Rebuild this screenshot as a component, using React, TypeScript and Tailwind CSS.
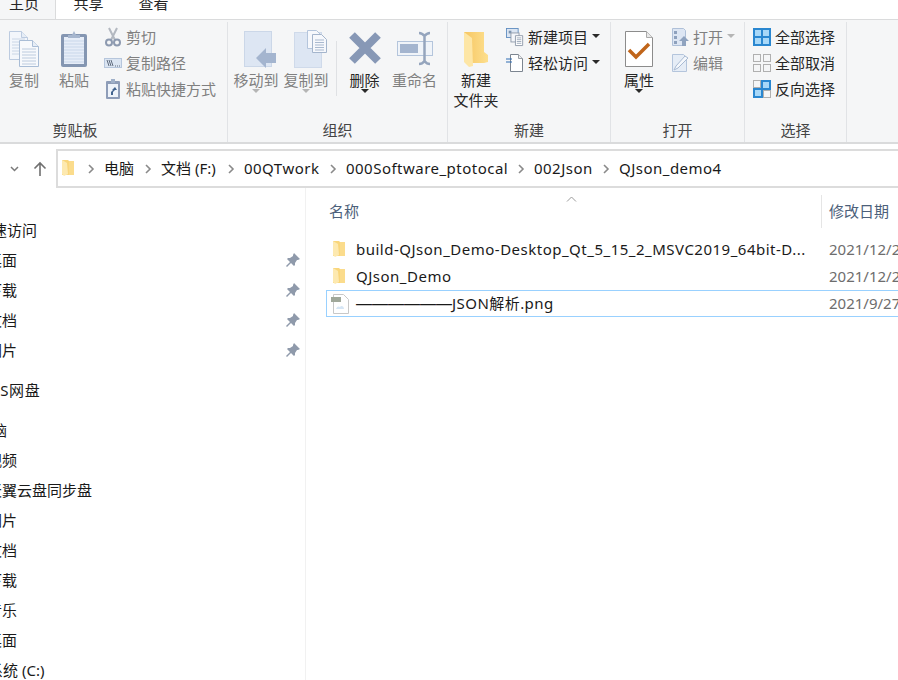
import type { ReactNode } from 'react';

const font = { fontFamily: '"Noto Sans", "Noto Sans CJK SC", sans-serif' };

const Copy = () => (
  <svg width="32" height="38" viewBox="0 0 32 38">
    <path d="M1.5 1.5h12l6 6v22h-18z" fill="#f3f6fb" stroke="#bccbe0" />
    <path d="M13.5 1.5v6h6" fill="#e6edf6" stroke="#bccbe0" />
    <path d="M4 9h13M4 12h13M4 15h13M4 18h13M4 21h13M4 24h13" stroke="#cad6e6" />
    <path d="M11.5 10.5h13l6 6v20h-19z" fill="#f7f9fc" stroke="#a9bdd6" />
    <path d="M24.5 10.5v6h6" fill="#e6edf6" stroke="#a9bdd6" />
    <path d="M14 19h14M14 22h14M14 25h14M14 28h14M14 31h14M14 34h14" stroke="#bccbde" />
  </svg>
);

const Paste = () => (
  <svg width="28" height="38" viewBox="0 0 28 38">
    <rect x="1" y="4" width="26" height="33" rx="2" fill="#8496b2" />
    <rect x="4" y="7" width="20" height="27" fill="#e6edf8" />
    <path d="M4 11h20M4 14h20M4 17h20M4 20h20M4 23h20M4 26h20M4 29h20M4 32h20" stroke="#c9d7ea" />
    <path d="M8 8V5h4l2-4 2 4h4v3z" fill="#a6b6ce" />
  </svg>
);

const Scissors = () => (
  <svg width="18" height="20" viewBox="0 0 18 20" fill="none">
    <path d="M5 1l6 12M13 1L7 13" stroke="#b3b8c0" strokeWidth="2" />
    <circle cx="5" cy="15.5" r="3" stroke="#8d9ab0" strokeWidth="2" />
    <circle cx="13" cy="15.5" r="3" stroke="#8d9ab0" strokeWidth="2" />
  </svg>
);

const CopyPath = () => (
  <svg width="18" height="12" viewBox="0 0 18 12">
    <rect x="0.5" y="1.5" width="17" height="9" fill="#dbe5f2" stroke="#b6c6dc" />
    <path d="M3 3l2 6M5 3l2 6M7 3l2 6M11 9h1M13 9h1M15 9h1" stroke="#5f6b7d" />
  </svg>
);

const PasteShortcut = () => (
  <svg width="18" height="20" viewBox="0 0 18 20">
    <rect x="2" y="2" width="14" height="18" rx="1" fill="#8e9db8" />
    <rect x="4" y="5" width="10" height="13" fill="#eef3fa" />
    <rect x="7" y="0" width="4" height="4" fill="#9fb0c9" />
    <path d="M7 16v-3l2-2H8l3-3 2 3h-2l-2 2v3z" fill="#42648f" />
  </svg>
);

const MoveTo = () => (
  <svg className="ml-[10px]" width="34" height="38" viewBox="0 0 34 38">
    <rect x="0.5" y="1.5" width="27" height="35" fill="#dde6f3" stroke="#cbd7e8" />
    <path d="M12 28l10-10v5h10v10H22v5z" fill="#a4b5cf" />
  </svg>
);

const CopyTo = () => (
  <svg className="ml-[10px]" width="34" height="38" viewBox="0 0 34 38">
    <rect x="0.5" y="2.5" width="27" height="35" fill="#dde6f3" stroke="#cfdaea" />
    <path d="M13.5 0.5h9l5 5v13h-14z" fill="#f6f8fc" stroke="#b4c5dc" />
    <path d="M18.5 4.5h9l5 5v13h-14z" fill="#f6f8fc" stroke="#a4b5cc" />
    <path d="M21 10h9M21 12.5h9M21 15h9M21 17.5h9M21 20h9" stroke="#a9b9cf" />
  </svg>
);

const Delete = () => (
  <svg width="34" height="38" viewBox="0 0 34 38">
    <path d="M4 5l26 26M30 5L4 31" stroke="#8798b6" strokeWidth="8" />
  </svg>
);

const Rename = () => (
  <svg width="38" height="38" viewBox="0 0 38 38">
    <rect x="1.5" y="11.5" width="35" height="14" fill="#f0f4f9" stroke="#b4c5dc" />
    <rect x="4" y="14" width="18" height="9" fill="#a4b5cf" />
    <path d="M23 3c3 0 4 1 5.5 3C30 4 31 3 34 3M28.5 6v25M23 34c3 0 4-1 5.5-3 1.5 2 2.5 3 5.5 3" fill="none" stroke="#95a5bd" strokeWidth="2.5" />
  </svg>
);

const NewFolder = () => (
  <svg width="26" height="38" viewBox="0 0 26 38">
    <defs>
      <linearGradient id="folderBack" x1="0" x2="1" y1="0" y2="0">
        <stop offset="0" stopColor="#f6c662" />
        <stop offset="1" stopColor="#fddf8e" />
      </linearGradient>
    </defs>
    <path d="M1 2h20v20l4 3v7l-4 1H8L1 30z" fill="url(#folderBack)" />
    <path d="M1 2l8 6 1 28-4 1-5-5z" fill="#fde6a6" />
  </svg>
);

const NewItem = () => (
  <svg width="20" height="20" viewBox="0 0 20 20">
    <rect x="0.5" y="0.5" width="13" height="10" fill="#dbe5f2" stroke="#5f8cc0" />
    <path d="M3 3h3v3H3z" fill="#7c94b0" />
    <rect x="5.5" y="5.5" width="9" height="10" fill="#f4f6fa" stroke="#8d98a8" />
    <path d="M10.5 8.5h8v11h-8z" fill="#fff" stroke="#8d98a8" />
    <path d="M12 11h5M12 13h5M12 15h5M12 17h5" stroke="#9aa7b8" />
  </svg>
);

const EasyAccess = () => (
  <svg width="18" height="20" viewBox="0 0 18 20">
    <path d="M4.5 1.5h8l4 4v13h-12z" fill="#fff" stroke="#7c8590" />
    <path d="M12.5 1.5v4h4" fill="#eee" stroke="#9a9fa6" />
    <path d="M0 6h6M0 9h6" stroke="#2f6cb3" strokeWidth="1.2" />
  </svg>
);

const Properties = () => (
  <svg width="30" height="38" viewBox="0 0 30 38">
    <path d="M1.5 1.5h21l6 6v29h-27z" fill="#fff" stroke="#8c8c8c" />
    <path d="M22.5 1.5v6h6" fill="#e8e8e8" stroke="#aaa" />
    <path d="M5 20l7 7 13-13" fill="none" stroke="#c0651a" strokeWidth="3.5" />
  </svg>
);

const OpenIcon = () => (
  <svg width="18" height="20" viewBox="0 0 18 20">
    <path d="M1.5 1.5h11l2 2v15h-13z" fill="#dde6f3" stroke="#afc0d8" />
    <path d="M3 4h3v3H3zM3 9h3v3H3zM3 14h3v3H3z" fill="#8ea1bd" />
    <path d="M8 14l5-5 5 5h-3v5h-4v-5z" fill="#8fa3bf" />
  </svg>
);

const EditIcon = () => (
  <svg width="18" height="20" viewBox="0 0 18 20">
    <path d="M1.5 1.5h11l3 3v14h-14z" fill="#e6edf6" stroke="#b4c5dc" />
    <path d="M3 17l2-4 9-10 3 2-10 10z" fill="#f5f8fc" stroke="#a9bbd3" />
  </svg>
);

// 0 = grey outline, 1 = blue filled
const SelectGrid = ({ cells }: { cells: number[] }) => (
  <svg width="18" height="18" viewBox="0 0 18 18">
    {cells.map((c, i) => {
      const x = i % 2 === 0 ? 0.5 : 10.5;
      const y = i < 2 ? 0.5 : 10.5;
      if (c) {
        return (
          <rect
            key={i}
            x={i % 2 === 0 ? 1 : 9}
            y={i < 2 ? 1 : 9}
            width="8"
            height="8"
            fill="#a8d8f8"
            stroke="#2a87d0"
            strokeWidth="2"
          />
        );
      }
      return <rect key={i} x={x} y={y} width="7" height="7" fill="#f5f6f7" stroke="#b0b0b0" />;
    })}
  </svg>
);

const AllGrid = () => (
  <svg width="18" height="18" viewBox="0 0 18 18">
    <rect x="1" y="1" width="16" height="16" fill="#a8d8f8" stroke="#2a87d0" strokeWidth="2" />
    <path d="M9 0v18M0 9h18" stroke="#2a87d0" strokeWidth="2" />
  </svg>
);

const Folder = () => (
  <svg width="13" height="17" viewBox="0 0 13 17">
    <path d="M0 0h6l1 1h5v14H0z" fill="#f9d67c" />
    <path d="M7 1h5v14H7z" fill="#fbdc8c" />
    <path d="M0 0l5 3 1 11-4 2-2-2z" fill="#fde9b0" />
  </svg>
);

const PngFile = () => (
  <svg width="19" height="20" viewBox="0 0 19 20">
    <path d="M2.5 0.5h10l5 5v14h-15z" fill="#fff" stroke="#c8c8c8" />
    <rect x="0" y="3" width="10" height="5" fill="#a0a89a" />
    <path d="M5 15c1-3 3-3 4-2 1-2 4-1 4 2z" fill="#d6e6f5" />
  </svg>
);

const Pin = () => (
  <svg width="14" height="14" viewBox="0 0 14 14">
    <path d="M8 0l6 6-2 1-1 0-2 3v2l-1 1-3-3-4 4-1-1 4-4-3-3 1-1h2l3-2v-1z" fill="#8f9aab" />
  </svg>
);

const Caret = ({ light }: { light?: boolean }) => (
  <svg width="8" height="4" viewBox="0 0 8 4">
    <path d="M0 0h8L4 4z" fill={light ? '#b5b5b5' : '#2a2a2a'} />
  </svg>
);

const Chevron = () => (
  <svg width="7" height="10" viewBox="0 0 7 10" fill="none">
    <path d="M1 1l4 4-4 4" stroke="#8a8a8a" strokeWidth="1.6" />
  </svg>
);

type BigProps = {
  icon: ReactNode;
  label: string;
  label2?: string;
  width: string;
  disabled?: boolean;
  caret?: boolean;
};

const BigButton = ({ icon, label, label2, width, disabled, caret }: BigProps) => (
  <div className={`${width} flex flex-col items-center pt-[8px] shrink-0`}>
    <div className="h-[38px] flex items-center justify-center">{icon}</div>
    <div className={`mt-[2px] h-[20px] leading-[20px] whitespace-nowrap ${disabled ? 'text-[#808080]' : 'text-[#262626]'}`}>
      {label}
    </div>
    {label2 && <div className="h-[20px] leading-[20px] whitespace-nowrap text-[#262626]">{label2}</div>}
    {caret && (
      <div className="mt-[-1px]">
        <Caret light={disabled} />
      </div>
    )}
  </div>
);

const SmallRow = ({ icon, label, disabled, caret }: { icon: ReactNode; label: string; disabled?: boolean; caret?: 'dark' | 'light' }) => (
  <div className="h-[26px] flex items-center whitespace-nowrap">
    <div className="w-[18px] flex justify-start">{icon}</div>
    <span className={`ml-[4px] ${disabled ? 'text-[#808080]' : 'text-[#262626]'}`}>{label}</span>
    {caret && (
      <span className="ml-[4px] mb-[2px]">
        <Caret light={caret === 'light'} />
      </span>
    )}
  </div>
);

const Group = ({ width, label, labelClass, children }: { width: string; label: string; labelClass?: string; children: ReactNode }) => (
  <div className={`${width} h-[120px] my-[2px] shrink-0 flex flex-col border-r border-[#e1e3e6]`}>
    <div className="flex flex-1 min-h-0">{children}</div>
    <div className={`h-[20px] mb-[2px] leading-[20px] text-center text-[#444] ${labelClass ?? ''}`}>{label}</div>
  </div>
);

const Ribbon = () => (
  <div className="flex h-[124px] bg-[#f5f6f7] border-b-2 border-[#dadbdc] text-[15px]">
    <Group width="w-[228px]" label="剪贴板" labelClass="w-[150px]">
      <BigButton icon={<Copy />} label="复制" width="w-[48px]" disabled />
      <BigButton icon={<Paste />} label="粘贴" width="w-[52px]" disabled />
      <div className="pt-[2px] ml-[4px] text-[15px]">
        <SmallRow icon={<Scissors />} label="剪切" disabled />
        <SmallRow icon={<CopyPath />} label="复制路径" disabled />
        <SmallRow icon={<PasteShortcut />} label="粘贴快捷方式" disabled />
      </div>
    </Group>
    <Group width="w-[220px]" label="组织">
      <div className="w-[3px]" />
      <BigButton icon={<MoveTo />} label="移动到" width="w-[50px]" disabled caret />
      <BigButton icon={<CopyTo />} label="复制到" width="w-[50px]" disabled caret />
      <div className="ml-[5px] mt-[19px] h-[55px] w-px bg-[#dfe1e4]" />
      <BigButton icon={<Delete />} label="删除" width="w-[55px]" caret />
      <BigButton icon={<Rename />} label="重命名" width="w-[45px]" disabled />
    </Group>
    <Group width="w-[163px]" label="新建">
      <BigButton icon={<NewFolder />} label="新建" label2="文件夹" width="w-[56px]" />
      <div className="pt-[2px] ml-[2px]">
        <SmallRow icon={<NewItem />} label="新建项目" caret="dark" />
        <SmallRow icon={<EasyAccess />} label="轻松访问" caret="dark" />
      </div>
    </Group>
    <Group width="w-[134px]" label="打开">
      <BigButton icon={<Properties />} label="属性" width="w-[56px]" caret />
      <div className="pt-[2px] ml-[4px]">
        <SmallRow icon={<OpenIcon />} label="打开" disabled caret="light" />
        <SmallRow icon={<EditIcon />} label="编辑" disabled />
      </div>
    </Group>
    <Group width="w-[102px]" label="选择">
      <div className="pt-[2px] ml-[8px]">
        <SmallRow icon={<AllGrid />} label="全部选择" />
        <SmallRow icon={<SelectGrid cells={[0, 0, 0, 0]} />} label="全部取消" />
        <SmallRow icon={<SelectGrid cells={[0, 1, 1, 0]} />} label="反向选择" />
      </div>
    </Group>
  </div>
);

const crumbs = [
  { text: '电脑', width: 'w-[41px]' },
  { text: '文档 (F:)', width: 'w-[67px]' },
  { text: '00QTwork', width: 'w-[86px] tracking-[0.48px]' },
  { text: '000Software_ptotocal', width: 'w-[172px] tracking-[0.48px]' },
  { text: '002Json', width: 'w-[69px] tracking-[0.48px]' },
  { text: 'QJson_demo4', width: 'w-[120px] tracking-[0.48px]' },
];

const AddressBar = () => (
  <div className="flex h-[39px] mt-[5px] text-[15px]">
    <div className="w-[56px] flex items-center shrink-0 pl-[10px]">
      <svg width="9" height="6" viewBox="0 0 9 6" fill="none">
        <path d="M1 1l3.5 3.5L8 1" stroke="#7a7a7a" strokeWidth="1.5" />
      </svg>
      <svg className="ml-[14px]" width="14" height="16" viewBox="0 0 14 16" fill="none">
        <path d="M7 15V2M1.5 7.5L7 2l5.5 5.5" stroke="#707070" strokeWidth="1.6" />
      </svg>
    </div>
    <div className="flex-1 flex items-center border-y-2 border-l-2 border-[#dcdcdc] pl-[4px] text-[#1a1a1a]">
      <div className="w-[26px] flex shrink-0">
        <Folder />
      </div>
      {crumbs.map((c) => (
        <div key={c.text} className="flex items-center shrink-0">
          <Chevron />
          <span className={`ml-[9px] ${c.width} whitespace-nowrap`}>{c.text}</span>
        </div>
      ))}
    </div>
  </div>
);

const navGroups = [
  {
    className: 'mt-[27px]',
    items: [
      { text: '快速访问', shift: '-ml-[23px]' },
      { text: '桌面', shift: '-ml-[13px]', pin: true },
      { text: '下载', shift: '-ml-[13px]', pin: true },
      { text: '文档', shift: '-ml-[13px]', pin: true },
      { text: '图片', shift: '-ml-[13px]', pin: true },
    ],
  },
  {
    className: 'mt-[10px]',
    items: [{ text: 'WPS网盘', shift: '-ml-[24px] tracking-[0.6px]' }],
  },
  {
    className: 'mt-[10px]',
    items: [
      { text: '此电脑', shift: '-ml-[38px]' },
      { text: '视频', shift: '-ml-[13px]' },
      { text: '天翼云盘同步盘', shift: '-ml-[13px]' },
      { text: '图片', shift: '-ml-[13px]' },
      { text: '文档', shift: '-ml-[13px]' },
      { text: '下载', shift: '-ml-[13px]' },
      { text: '音乐', shift: '-ml-[13px]' },
      { text: '桌面', shift: '-ml-[13px]' },
      { text: '系统 (C:)', shift: '-ml-[12px]' },
    ],
  },
];

const Sidebar = () => (
  <div className="w-[306px] shrink-0 border-r border-[#f1f1f1] text-[15px] text-[#1a1a1a] overflow-hidden">
    {navGroups.map((g, i) => (
      <div key={i} className={g.className}>
        {g.items.map((item) => (
          <div key={item.text} className="h-[30px] flex items-center">
            <span className={`${item.shift} whitespace-nowrap flex-1`}>{item.text}</span>
            {'pin' in item && item.pin && (
              <span className="mr-[5px] flex">
                <Pin />
              </span>
            )}
          </div>
        ))}
      </div>
    ))}
  </div>
);

const files = [
  { name: 'build-QJson_Demo-Desktop_Qt_5_15_2_MSVC2019_64bit-D...', date: '2021/12/23', icon: <Folder /> },
  { name: 'QJson_Demo', date: '2021/12/23', icon: <Folder /> },
];

const FileList = () => (
  <div className="relative flex-1 min-w-0 overflow-hidden text-[15px]">
    <svg className="absolute left-[260px] top-[8px]" width="11" height="6" viewBox="0 0 11 6" fill="none">
      <path d="M1 5.5l4.5-4.5 4.5 4.5" stroke="#9a9a9a" />
    </svg>
    <div className="flex mt-[7px] h-[33px] items-center text-[#4c607a]">
      <div className="w-[515px] pl-[23px] shrink-0">名称</div>
      <div className="h-full border-l border-[#e5e5e5] pl-[7px] flex items-center whitespace-nowrap">修改日期</div>
    </div>
    <div className="mt-[8px] ml-[20px] w-[620px]">
      {files.map((f) => (
        <div key={f.name} className="h-[27px] flex items-center border border-transparent whitespace-nowrap">
          <div className="w-[29px] shrink-0 flex pl-[6px]">{f.icon}</div>
          <div className="w-[473px] shrink-0 text-[#1a1a1a] tracking-[0.5px]">{f.name}</div>
          <div className="text-[#6d6d6d]">{f.date}</div>
        </div>
      ))}
      <div className="h-[27px] flex items-center border border-[#99d1ff] whitespace-nowrap">
        <div className="w-[29px] shrink-0 flex pl-[4px]">
          <PngFile />
        </div>
        <div className="w-[473px] shrink-0 text-[#1a1a1a] tracking-[0.45px]">
          <span className="text-[16px] tracking-normal" style={{ fontFamily: '"Liberation Sans", sans-serif' }}>
            ——————
          </span>
          JSON解析.png
        </div>
        <div className="text-[#6d6d6d]">2021/9/27</div>
      </div>
    </div>
  </div>
);

export default function App() {
  return (
    <div className="w-[898px] h-[680px] overflow-hidden bg-white flex flex-col" style={font}>
      <div className="flex h-[20px] shrink-0 border-b border-[#dadbdc] text-[15px] text-[#262626] overflow-hidden">
        <div className="w-[56px] h-[20px] shrink-0 border-r border-[#dadbdc] bg-[#f5f6f7] pl-[9px]">
          <div className="-mt-[7px] leading-[20px]">主页</div>
        </div>
        <div className="w-[65px] text-center -mt-[7px] leading-[20px]">共享</div>
        <div className="w-[65px] text-center -mt-[7px] leading-[20px]">查看</div>
      </div>
      <Ribbon />
      <AddressBar />
      <div className="flex flex-1 min-h-0">
        <Sidebar />
        <FileList />
      </div>
    </div>
  );
}
